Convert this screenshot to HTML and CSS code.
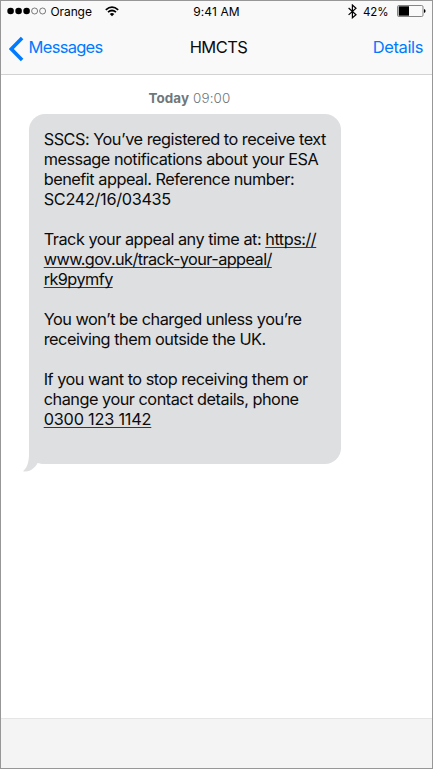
FILE: index.html
```
<!DOCTYPE html>
<html lang="en">
<head>
<meta charset="utf-8">
<title>Messages</title>
<link rel="stylesheet" href="styles.css">
</head>
<body>
<div class="phone">
  <header class="header">
    <div class="status">
      <div class="carrier">
        <svg class="signal" width="40" height="8" viewBox="0 0 40 8"><circle cx="3.6" cy="4" r="3.3"/><circle cx="11.6" cy="4" r="3.3"/><circle cx="19.6" cy="4" r="3.3"/><g fill="none" stroke="#000" stroke-width=".5"><circle cx="27.6" cy="4" r="3"/><circle cx="35.6" cy="4" r="3"/></g></svg>
        <span class="carrier-name">Orange</span>
        <svg class="wifi" width="14" height="11" viewBox="0 0 14 11"><path d="M.8 3.8Q7-1.5 13.2 3.8M3 6.2Q7 2.8 11 6.2" fill="none" stroke="#000" stroke-width="1.7"/><path d="M4.7 7.9Q7 6 9.3 7.9L7 10.3Z"/></svg>
      </div>
      <time class="clock">9:41 AM</time>
      <div class="power">
        <svg class="bluetooth" width="9" height="15" viewBox="0 0 9 15"><path d="M.6 4L8 10.7 4.4 13.8V1L8 4.2.6 10.9" fill="none" stroke="#000" stroke-width="1.2"/></svg>
        <span class="percent">42%</span>
        <svg class="battery" width="29" height="12" viewBox="0 0 29 12"><rect x=".5" y=".5" width="25.5" height="11" rx="1.3" fill="none" stroke="#777" stroke-width=".9"/><rect x="1.7" y="1.3" width="10.3" height="9.4"/><path d="M27 4Q28.6 4.3 28.6 6T27 8Z"/></svg>
      </div>
    </div>
    <nav class="nav">
      <a class="back"><svg width="15" height="26" viewBox="0 0 15 26"><path d="M13.1 2L2.3 13 13.1 24" fill="none" stroke="#007aff" stroke-width="3.6"/></svg><span>Messages</span></a>
      <h1 class="title">HMCTS</h1>
      <a class="details">Details</a>
    </nav>
  </header>
  <main class="thread">
    <div class="stamp"><b>Today</b> <span class="time">09:00</span></div>
    <div class="bubble">
      <p>SSCS: You’ve registered to receive text<br>message notifications about your ESA<br>benefit appeal. Reference number:<br><span class="digits">SC242/16/03435</span></p>
      <p>Track your appeal any time at: <u>https://</u><br><u class="link">www.gov.uk/track-your-appeal/</u><br><u class="link">rk9pymfy</u></p>
      <p>You won’t be charged unless you’re<br>receiving them outside the UK.</p>
      <p>If you want to stop receiving them or<br>change your contact details, phone<br><u class="phone-number">0300 123 1142</u></p>
      <svg class="tail" width="24" height="26" viewBox="0 0 24 26"><path d="M6 0V8C6 16 4 22 0 25.2 7 26.5 12 22 14.5 17Q18 18 24 18V0Z" fill="#dedfe1"/></svg>
    </div>
  </main>
  <footer class="composer"></footer>
</div>
</body>
</html>
```
FILE: styles.css
```
* { box-sizing: border-box; }
body { margin: 0; font-family: Inter, "Liberation Sans", sans-serif; color: #0b0b0c; }
.phone { width: 433px; height: 769px; border: 1px solid #979797; background: #fff; display: flex; flex-direction: column; }
.header { height: 74px; background: #f9f9f9; border-bottom: 1px solid #d2d2d2; flex: none; }
.status { height: 20px; display: grid; grid-template-columns: 1fr auto 1fr; align-items: center; font-size: 12px; color: #000; }
.carrier { display: flex; align-items: center; padding-left: 5.5px; }
.carrier-name { margin-left: 4px; width: 42px; white-space: nowrap; letter-spacing: -.1px; }
.wifi { margin-left: 12px; }
.power { display: flex; align-items: center; justify-content: flex-end; padding-right: 6px; }
.percent { margin: 1px 9px 0 6px; font-size: 11.5px; width: 25px; white-space: nowrap; letter-spacing: -.15px; }
.clock { letter-spacing: .1px; padding-top: 1px; }
.nav { height: 52px; display: grid; grid-template-columns: 1fr auto 1fr; align-items: center; padding: 0 9px 0 8px; font-size: 16.5px; }
.back { display: flex; align-items: center; gap: 4.6px; color: #007aff; letter-spacing: -.72px; }
.back svg { margin-top: 4px; }
.title { margin: 0 0 0 5px; font-size: 16.5px; font-weight: 400; letter-spacing: -.55px; }
.details { color: #007aff; text-align: right; letter-spacing: -.38px; }
.thread { flex: 1; padding-top: 15px; }
.stamp { height: 24px; line-height: 17px; margin-left: 147.5px; font-size: 13.4px; letter-spacing: .1px; color: #6f777b; }
.stamp b { font-weight: 650; }
.time { font-weight: 350; letter-spacing: .15px; }
.bubble { position: relative; width: 312px; height: 350px; margin-left: 28px; padding: 15px 14.7px; border-radius: 16px; background: #dedfe1; font-size: 16.3px; line-height: 20px; white-space: nowrap; letter-spacing: -.485px; }
.bubble p { margin: 0 0 20px; }
.bubble u { text-decoration-color: #38383a; text-decoration-thickness: 1px; text-underline-offset: 2px; text-decoration-skip-ink: none; }
.bubble .digits { letter-spacing: -.32px; }
.bubble .link { letter-spacing: -.58px; }
.bubble .phone-number { letter-spacing: -.21px; }
.tail { position: absolute; left: -6px; bottom: -8px; }
.composer { height: 50px; background: #f4f4f4; border-top: 1px solid #e5e5e5; }
```
